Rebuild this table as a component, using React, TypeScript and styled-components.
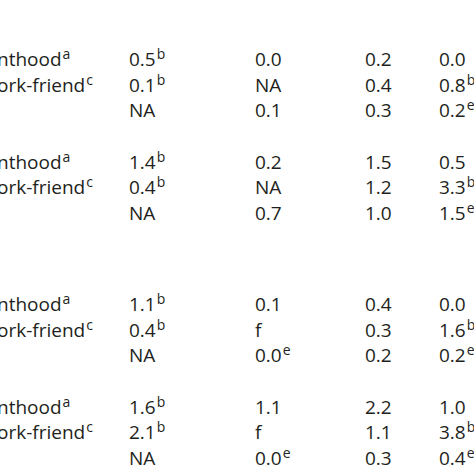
import React from "react";
import styled, { createGlobalStyle } from "styled-components";

const Global = createGlobalStyle`
  html, body { margin: 0; padding: 0; background: #ffffff; }
  body { overflow: hidden; }
`;

const Page = styled.div`
  width: 474px;
  height: 474px;
  overflow: hidden;
  box-sizing: border-box;
  padding-top: 47px;
  font-family: "Open Sans", "Noto Sans", sans-serif;
  font-size: 19px;
  color: #231f20;
  display: flex;
  flex-direction: column;
  gap: 65px;
`;

const Section = styled.div`
  display: flex;
  flex-direction: column;
  gap: 25.7px;
`;

const Group = styled.div`
  display: flex;
  flex-direction: column;
`;

const Row = styled.div`
  display: grid;
  grid-template-columns: 129px 126px 110px 74px 1fr;
  height: 25.7px;
  line-height: 25.7px;
  white-space: nowrap;
`;

const Label = styled.div`
  overflow: hidden;
  margin-left: -3px;
`;

const Cell = styled.div``;

const Sup = styled.span`
  font-size: 14px;
  line-height: 0;
  vertical-align: 7px;
  margin-left: 1px;
`;

type Val = [string, string?];
type RowData = { label?: string; mark?: string; vals: Val[] };

const sections: RowData[][][] = [
  [
    [
      { label: "nthood", mark: "a", vals: [["0.5", "b"], ["0.0"], ["0.2"], ["0.0"]] },
      { label: "ork-friend", mark: "c", vals: [["0.1", "b"], ["NA"], ["0.4"], ["0.8", "b"]] },
      { vals: [["NA"], ["0.1"], ["0.3"], ["0.2", "e"]] },
    ],
    [
      { label: "nthood", mark: "a", vals: [["1.4", "b"], ["0.2"], ["1.5"], ["0.5"]] },
      { label: "ork-friend", mark: "c", vals: [["0.4", "b"], ["NA"], ["1.2"], ["3.3", "b"]] },
      { vals: [["NA"], ["0.7"], ["1.0"], ["1.5", "e"]] },
    ],
  ],
  [
    [
      { label: "nthood", mark: "a", vals: [["1.1", "b"], ["0.1"], ["0.4"], ["0.0"]] },
      { label: "ork-friend", mark: "c", vals: [["0.4", "b"], ["f"], ["0.3"], ["1.6", "b"]] },
      { vals: [["NA"], ["0.0", "e"], ["0.2"], ["0.2", "e"]] },
    ],
    [
      { label: "nthood", mark: "a", vals: [["1.6", "b"], ["1.1"], ["2.2"], ["1.0"]] },
      { label: "ork-friend", mark: "c", vals: [["2.1", "b"], ["f"], ["1.1"], ["3.8", "b"]] },
      { vals: [["NA"], ["0.0", "e"], ["0.3"], ["0.4", "e"]] },
    ],
  ],
];

export default function App() {
  return (
    <>
      <Global />
      <Page>
        {sections.map((groups, si) => (
          <Section key={si}>
            {groups.map((rows, gi) => (
              <Group key={gi}>
                {rows.map((r, ri) => (
                  <Row key={ri}>
                    <Label>
                      {r.label}
                      {r.mark && <Sup>{r.mark}</Sup>}
                    </Label>
                    {r.vals.map(([v, s], ci) => (
                      <Cell key={ci}>
                        {v}
                        {s && <Sup>{s}</Sup>}
                      </Cell>
                    ))}
                    <Cell />
                  </Row>
                ))}
              </Group>
            ))}
          </Section>
        ))}
      </Page>
    </>
  );
}
